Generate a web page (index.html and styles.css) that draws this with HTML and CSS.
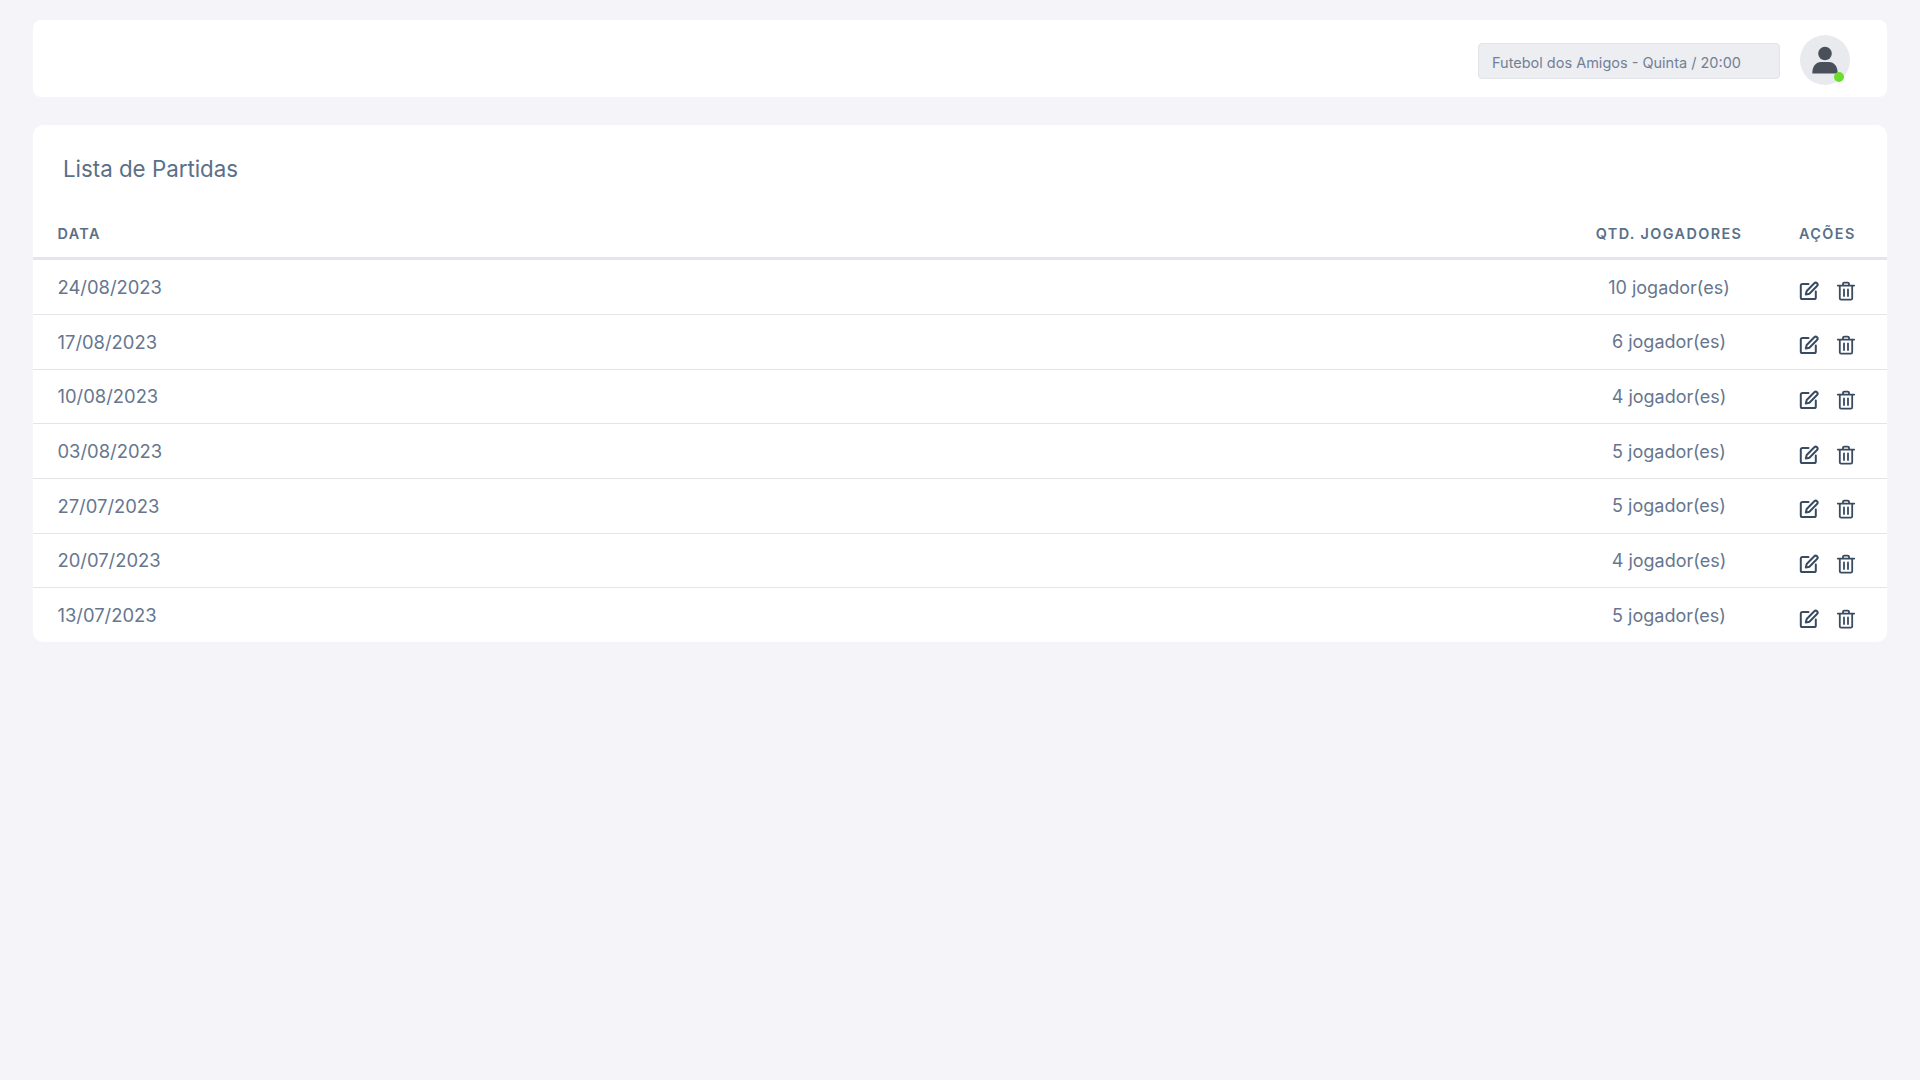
FILE: index.html
```html
<!DOCTYPE html>
<html lang="pt-BR">
<head>
    <meta charset="UTF-8">
    <meta name="viewport" content="width=device-width, initial-scale=1.0">
    <title>Lista de Partidas</title>
    <link rel="stylesheet" href="styles.css">
</head>
<body>
    <svg class="defs" width="0" height="0">
        <symbol id="edit" viewBox="0 0 20 20">
            <path d="M9.5 3H3.4A1.6 1.6 0 0 0 1.8 4.6v11.8A1.6 1.6 0 0 0 3.4 18h11.8a1.6 1.6 0 0 0 1.6-1.6v-6" fill="none" stroke="currentColor" stroke-width="2" stroke-linecap="round"/>
            <path d="M15.3 2.3a1.9 1.9 0 0 1 2.7 2.7l-7.6 7.7-3.6.9.9-3.6z" fill="none" stroke="currentColor" stroke-width="2" stroke-linejoin="round"/>
        </symbol>
        <symbol id="trash" viewBox="0 0 20 20">
            <path d="M1.8 4.6h16.4M7 4.4V3a1.4 1.4 0 0 1 1.4-1.4h3.2A1.4 1.4 0 0 1 13 3v1.4M3.8 4.6v12.6A1.4 1.4 0 0 0 5.2 18.6h9.6a1.4 1.4 0 0 0 1.4-1.4V4.6M8 8.5v6.5M12 8.5v6.5" fill="none" stroke="currentColor" stroke-width="1.8" stroke-linecap="round"/>
        </symbol>
    </svg>

    <header class="topbar">
        <div class="group-select">Futebol dos Amigos - Quinta / 20:00</div>
        <div class="avatar">
            <svg class="avatar-icon" viewBox="0 0 26 28">
                <circle cx="13" cy="7.5" r="6.8" fill="currentColor"/>
                <path d="M0.3 27.5C0.3 20 4 16 9 16h8c5 0 8.7 4 8.7 11.5z" fill="currentColor"/>
            </svg>
            <span class="status-dot"></span>
        </div>
    </header>

    <main class="card">
        <h2 class="card-title">Lista de Partidas</h2>
        <table class="matches">
            <thead>
                <tr>
                    <th class="col-date">Data</th>
                    <th class="col-players">Qtd. Jogadores</th>
                    <th class="col-actions">Ações</th>
                </tr>
            </thead>
            <tbody>
                <tr>
                    <td class="col-date">24/08/2023</td>
                    <td class="col-players">10 jogador(es)</td>
                    <td class="col-actions"><div class="actions"><svg class="icon"><use href="#edit"/></svg><svg class="icon"><use href="#trash"/></svg></div></td>
                </tr>
                <tr>
                    <td class="col-date">17/08/2023</td>
                    <td class="col-players">6 jogador(es)</td>
                    <td class="col-actions"><div class="actions"><svg class="icon"><use href="#edit"/></svg><svg class="icon"><use href="#trash"/></svg></div></td>
                </tr>
                <tr>
                    <td class="col-date">10/08/2023</td>
                    <td class="col-players">4 jogador(es)</td>
                    <td class="col-actions"><div class="actions"><svg class="icon"><use href="#edit"/></svg><svg class="icon"><use href="#trash"/></svg></div></td>
                </tr>
                <tr>
                    <td class="col-date">03/08/2023</td>
                    <td class="col-players">5 jogador(es)</td>
                    <td class="col-actions"><div class="actions"><svg class="icon"><use href="#edit"/></svg><svg class="icon"><use href="#trash"/></svg></div></td>
                </tr>
                <tr>
                    <td class="col-date">27/07/2023</td>
                    <td class="col-players">5 jogador(es)</td>
                    <td class="col-actions"><div class="actions"><svg class="icon"><use href="#edit"/></svg><svg class="icon"><use href="#trash"/></svg></div></td>
                </tr>
                <tr>
                    <td class="col-date">20/07/2023</td>
                    <td class="col-players">4 jogador(es)</td>
                    <td class="col-actions"><div class="actions"><svg class="icon"><use href="#edit"/></svg><svg class="icon"><use href="#trash"/></svg></div></td>
                </tr>
                <tr>
                    <td class="col-date">13/07/2023</td>
                    <td class="col-players">5 jogador(es)</td>
                    <td class="col-actions"><div class="actions"><svg class="icon"><use href="#edit"/></svg><svg class="icon"><use href="#trash"/></svg></div></td>
                </tr>
            </tbody>
        </table>
    </main>
</body>
</html>
```

FILE: styles.css
```css
body {
    margin: 0;
    padding: 20px 33px;
    background-color: #f4f4f9;
    font-family: Inter, "Liberation Sans", sans-serif;
    color: #64748b;
}

.defs {
    position: absolute;
}

.topbar {
    display: flex;
    justify-content: flex-end;
    align-items: center;
    gap: 20px;
    box-sizing: border-box;
    height: 77px;
    padding-top: 3px;
    padding-right: 37px;
    background-color: white;
    border-radius: 8px;
}

.group-select {
    box-sizing: border-box;
    width: 302px;
    height: 36px;
    margin-top: 2px;
    padding-left: 13px;
    line-height: 37px;
    font-size: 14.5px;
    color: #718096;
    background-color: #edeef1;
    border: 1px solid #e2e4e9;
    border-radius: 4px;
}

.avatar {
    position: relative;
    display: flex;
    justify-content: center;
    align-items: center;
    width: 50px;
    height: 50px;
    border-radius: 50%;
    background-color: #e8eaed;
}

.avatar-icon {
    width: 26px;
    height: 28px;
    color: #4a5059;
}

.status-dot {
    position: absolute;
    right: 6px;
    bottom: 3px;
    width: 10px;
    height: 10px;
    border-radius: 50%;
    background-color: #6ddd2d;
}

.card {
    margin-top: 28px;
    background-color: white;
    border-radius: 10px;
    overflow: hidden;
}

.card-title {
    margin: 0;
    padding: 27px 30px 0;
    height: 34px;
    line-height: 34px;
    font-size: 22.3px;
    font-weight: 400;
    color: #5a6f88;
}

.matches {
    width: 100%;
    margin-top: 18px;
    border-collapse: collapse;
}

th {
    height: 54.7px;
    padding: 6px 0 0;
    box-sizing: border-box;
    font-size: 14.4px;
    font-weight: 600;
    letter-spacing: 1.4px;
    text-transform: uppercase;
    color: #5a6f88;
    border-bottom: 3px solid #e3e6ec;
}

td {
    height: 53.7px;
    padding: 0;
    font-size: 18px;
    color: #66768e;
    border-bottom: 1px solid #e3e5e8;
}

tbody tr:last-child td {
    border-bottom: none;
}

.col-date {
    padding-left: 24.5px;
    text-align: left;
}

td.col-date {
    font-size: 18.4px;
}

.col-players {
    width: 194px;
    text-align: center;
}

.col-actions {
    box-sizing: border-box;
    width: 121px;
    padding-left: 33px;
    text-align: left;
}

.actions {
    display: flex;
    gap: 17px;
    margin-top: 7px;
}

.icon {
    width: 20px;
    height: 20px;
    color: #384b61;
}
```
